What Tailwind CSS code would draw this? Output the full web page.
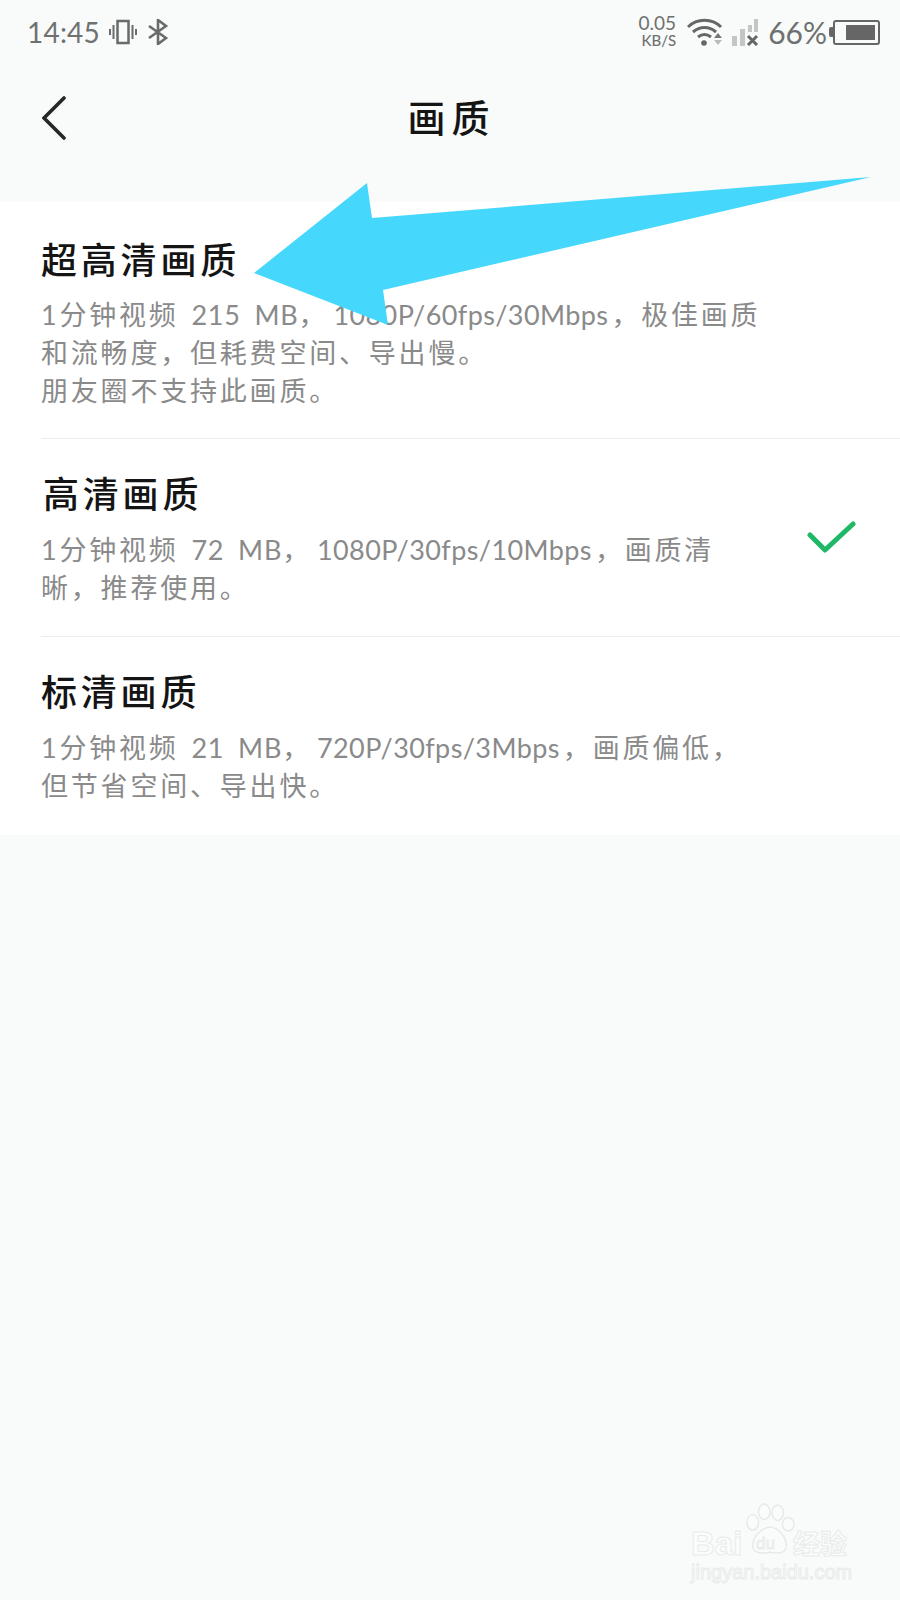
<!DOCTYPE html>
<html lang="zh-CN">
  <head>
    <meta charset="UTF-8" />
    <title>画质</title>
    <script src="https://cdn.jsdelivr.net/npm/@tailwindcss/browser@4"></script>
  </head>
  <body class="bg-[#f9fbfa] font-['Lato','Noto_Sans_CJK_SC',sans-serif]">
    <div class="relative w-[900px] h-[1600px] overflow-hidden">
      <!-- status bar -->
      <div class="flex items-center h-[64px] pl-[27px] pr-[20px] text-[#6f7170]">
        <span class="text-[28px] leading-none tracking-[0.2px]">14:45</span>
        <svg class="ml-[9px]" width="28" height="26" viewBox="0 0 28 26" fill="none" stroke="#6a6a6a">
          <rect x="8.5" y="2" width="11" height="22" stroke-width="2.5" />
          <path d="M4.5 6v14M1 10v6M23.500 6v14M27 10v6" stroke-width="2" />
        </svg>
        <svg class="ml-[10px]" width="22" height="26" viewBox="0 0 22 26" fill="none" stroke="#6a6a6a" stroke-width="2.600">
          <path d="M2 7l17 12-8 6V1l8 6L2 19" />
        </svg>
        <div class="ml-auto flex flex-col items-end mr-[11px] mt-[-3px]">
          <span class="text-[19px] leading-[19px]">0.05</span>
          <span class="text-[15px] leading-[15px] mt-[1px] font-medium">KB/S</span>
        </div>
        <svg width="36" height="28" viewBox="0 0 36 28" fill="none">
          <path d="M1 9C10 0 25 0 34 9" stroke="#666" stroke-width="3" />
          <path d="M6 14c7-6 16-6 23 0" stroke="#666" stroke-width="3" />
          <path d="M11 19c4-3 9-3 13 0" stroke="#666" stroke-width="3" />
          <circle cx="17" cy="25" r="2.800" fill="#666" />
          <path d="M31 15l4 5h-8z" fill="#777" />
          <path d="M31 27l4-5h-8z" fill="#bbb" />
        </svg>
        <svg class="ml-[8px]" width="28" height="27" viewBox="0 0 28 27">
          <rect x="1" y="17" width="5" height="10" fill="#c4c6c5" />
          <rect x="9" y="10" width="5" height="17" fill="#c4c6c5" />
          <rect x="17" y="6" width="4" height="7" fill="#c4c6c5" />
          <rect x="23" y="0" width="4" height="13" fill="#c4c6c5" />
          <path d="M17 17l9 9M26 17l-9 9" stroke="#666" stroke-width="3" />
        </svg>
        <span class="ml-[9px] text-[30px] leading-none">66%</span>
        <div class="ml-[2px] flex items-center">
          <div class="w-[4px] h-[10px] bg-[#666] rounded-l-[2px]"></div>
          <div class="w-[47px] h-[25px] border-[2.500px] border-[#666] rounded-[3px] flex justify-end items-center pr-[3px]">
            <div class="w-[29px] h-[15px] bg-[#666]"></div>
          </div>
        </div>
      </div>

      <!-- header -->
      <div class="relative flex items-center justify-center h-[138px] pb-[32px]">
        <svg class="absolute left-[42px] top-[32px]" width="24" height="44" viewBox="0 0 24 44" fill="none" stroke="#262626" stroke-width="3.600" stroke-linecap="round">
          <path d="M22 2L2 22l20 20" />
        </svg>
        <h1 class="text-[38px] leading-none font-medium tracking-[6px] text-[#141414] ml-[3px]">画质</h1>
      </div>

      <!-- options -->
      <div class="bg-white h-[633px]">
        <div class="ml-[41px] h-[237px] pt-[36px] border-b border-[#eceeed]">
          <h2 class="text-[36px] leading-[44px] font-medium tracking-[3.800px] text-[#141414]">超高清画质</h2>
          <p class="mt-[14px] whitespace-nowrap text-[27px] leading-[38px] tracking-[2.800px] text-[#8a8a8a]">1分钟视频 <span class="ml-[3px] tracking-[0.8px] [word-spacing:6px]">215 MB</span>，<span class="ml-[5px] mr-[3px] tracking-[0.4px]">1080P/60fps/30Mbps</span>，极佳画质<br />和流畅度，但耗费空间、导出慢。<br />朋友圈不支持此画质。</p>
        </div>
        <div class="relative ml-[41px] h-[198px] pt-[33px] border-b border-[#eceeed]">
          <h2 class="text-[36px] leading-[44px] font-medium tracking-[3.800px] text-[#141414] pl-[2px]">高清画质</h2>
          <p class="mt-[15px] whitespace-nowrap text-[27px] leading-[38px] tracking-[2.800px] text-[#8a8a8a]">1分钟视频 <span class="ml-[3px] tracking-[0.8px] [word-spacing:6px]">72 MB</span>，<span class="ml-[5px] mr-[3px] tracking-[0.4px]">1080P/30fps/10Mbps</span>，画质清<br />晰，推荐使用。</p>
          <svg class="absolute left-[766px] top-[81px]" width="50" height="38" viewBox="0 0 50 38" fill="none" stroke="#1fb866" stroke-width="5" stroke-linecap="round" stroke-linejoin="round">
            <path d="M3 15l15 15L46 4" />
          </svg>
        </div>
        <div class="ml-[41px] pt-[33px]">
          <h2 class="text-[36px] leading-[44px] font-medium tracking-[3.800px] text-[#141414]">标清画质</h2>
          <p class="mt-[15px] whitespace-nowrap text-[27px] leading-[38px] tracking-[2.800px] text-[#8a8a8a]">1分钟视频 <span class="ml-[3px] tracking-[0.8px] [word-spacing:6px]">21 MB</span>，<span class="ml-[5px] mr-[3px] tracking-[0.4px]">720P/30fps/3Mbps</span>，画质偏低，<br />但节省空间、导出快。</p>
        </div>
      </div>

      <!-- annotation arrow -->
      <svg class="absolute left-0 top-0" width="900" height="400" viewBox="0 0 900 400">
        <polygon points="254,273 367,183 372,218 871,177 383,290 388,325" fill="#46d8fc" />
      </svg>

      <!-- watermark -->
      <div class="absolute left-[691px] top-[1500px] w-[170px] h-[78px] text-[#fbfcfc] [-webkit-text-stroke:1px_#e9ebea]">
        <svg class="absolute left-[54px] top-[3px]" width="50" height="54" viewBox="0 0 52 54" fill="#fafbfb" stroke="#e6e8e7" stroke-width="1.400">
          <ellipse cx="8" cy="19" rx="6" ry="8" />
          <ellipse cx="20" cy="8" rx="6" ry="8" />
          <ellipse cx="34" cy="9" rx="6" ry="8" />
          <ellipse cx="45" cy="21" rx="6" ry="7" />
          <path d="M26 24c8 0 17 10 17 19 0 8-8 9-17 7-9 2-18 1-18-7 0-9 10-19 18-19z" />
        </svg>
        <span class="absolute left-0 top-[24px] text-[33px] leading-[40px] font-bold font-['Liberation_Sans',sans-serif]">Bai</span>
        <span class="absolute left-[65px] top-[33px] text-[17px] leading-[22px] font-['Liberation_Sans',sans-serif]">du</span>
        <span class="absolute left-[102px] top-[27px] text-[27px] leading-[34px] font-bold">经验</span>
        <span class="absolute left-0 top-[60px] text-[20px] leading-[24px] font-['Liberation_Sans',sans-serif]">jingyan.baidu.com</span>
      </div>
    </div>
  </body>
</html>
